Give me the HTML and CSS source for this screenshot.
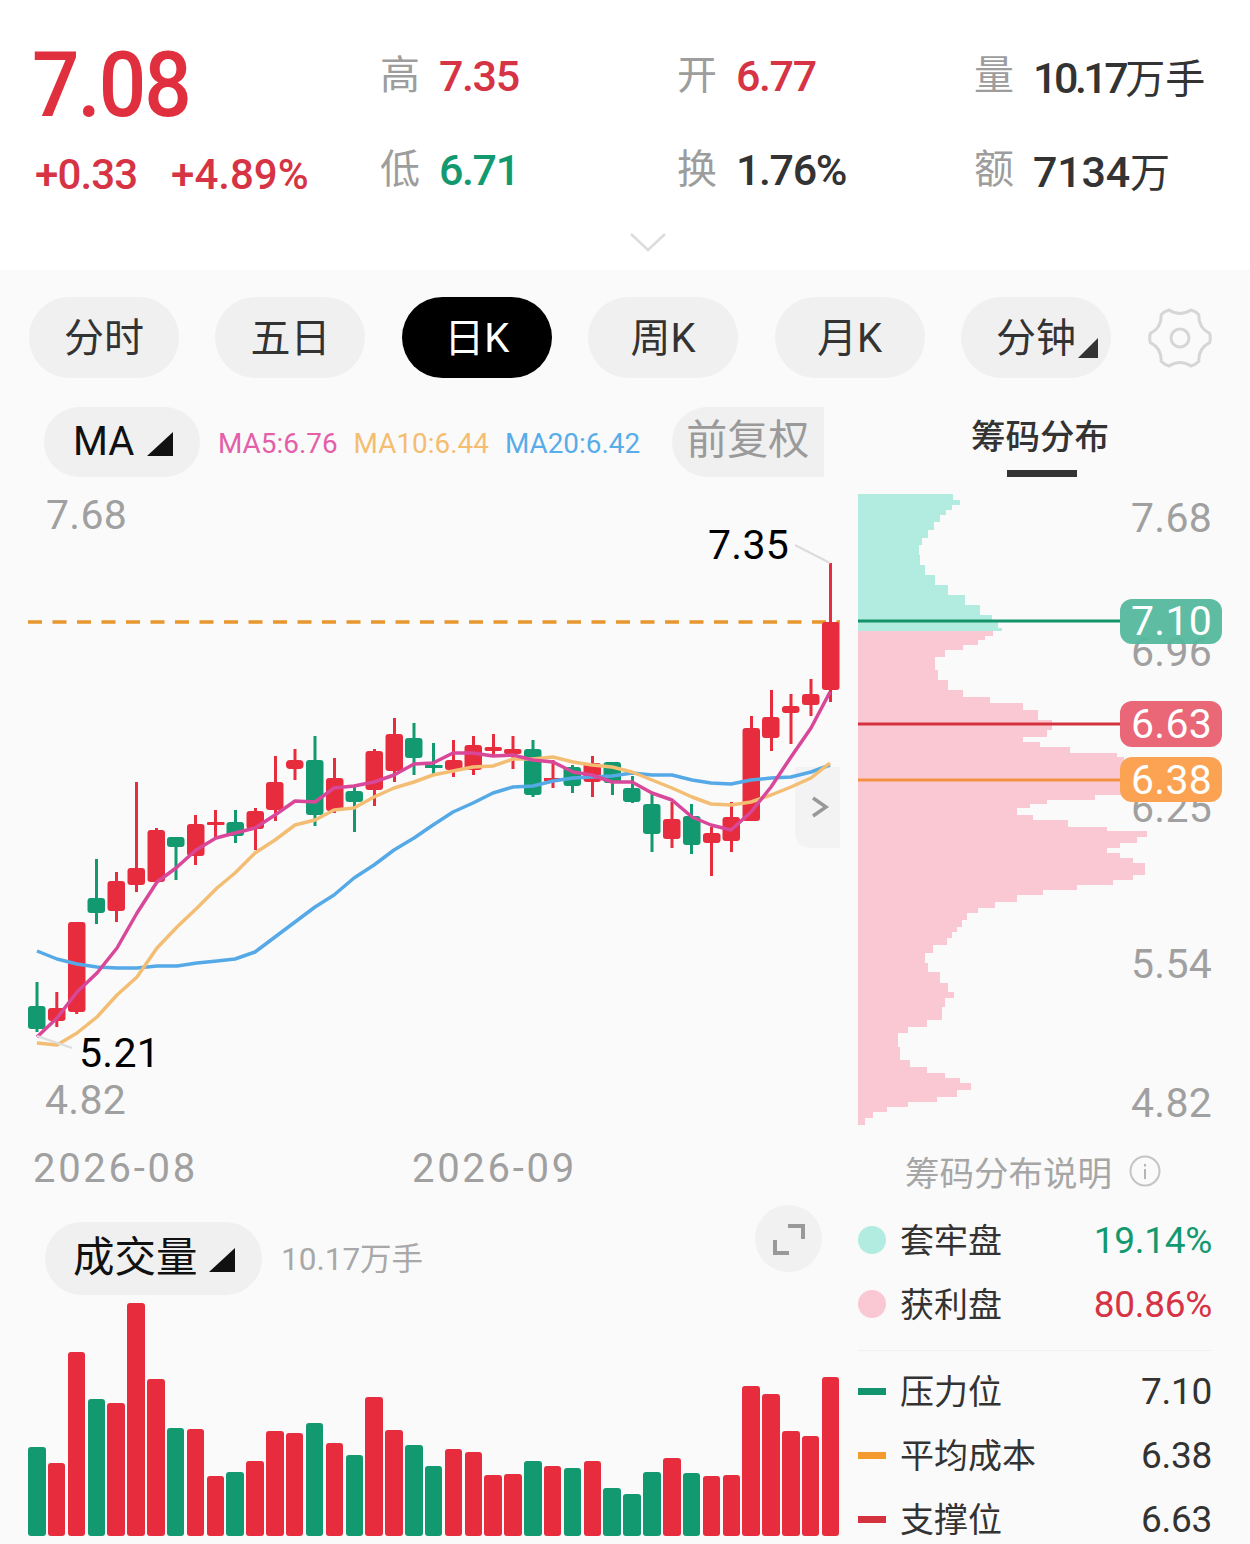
FILE: index.html
```html
<!DOCTYPE html>
<html lang="zh-CN">
<head>
<meta charset="utf-8">
<title>K线</title>
<link rel="stylesheet" href="styles.css">
</head>
<body>
<div class="app">
  <header class="quote">
    <div class="quote-grid">
      <div class="price-block">
        <div class="price">7.08</div>
        <div class="change"><span>+0.33</span><span>+4.89%</span></div>
      </div>
      <div class="stat-col">
        <div class="stat"><span class="k">高</span><span class="v up">7.35</span></div>
        <div class="stat"><span class="k">低</span><span class="v down">6.71</span></div>
      </div>
      <div class="stat-col">
        <div class="stat"><span class="k">开</span><span class="v up">6.77</span></div>
        <div class="stat"><span class="k">换</span><span class="v">1.76%</span></div>
      </div>
      <div class="stat-col">
        <div class="stat"><span class="k">量</span><span class="v"><span class="tight">10.17</span><span class="unit">万手</span></span></div>
        <div class="stat"><span class="k">额</span><span class="v"><span class="open">7134</span><span class="unit">万</span></span></div>
      </div>
    </div>
    <div class="expander">
      <svg class="chev" width="38" height="20" viewBox="0 0 38 20"><path d="M2 2 L19 18 L36 2" fill="none" stroke="#dcdcdc" stroke-width="2.5"/></svg>
    </div>
  </header>

  <main class="panel">
    <nav class="tabs">
      <div class="tab">分时</div>
      <div class="tab">五日</div>
      <div class="tab active">日K</div>
      <div class="tab">周K</div>
      <div class="tab">月K</div>
      <div class="tab">分钟<i class="corner"></i></div>
      <svg class="gear" width="64" height="62" viewBox="-32 -31 64 62"><path d="M29.6-4.7Q31 0 29.6 4.7Q18.2 10.5 18.9 23.3Q15.5 27 10.8 28Q0 21-10.8 28Q-15.5 27-18.9 23.3Q-18.2 10.5-29.6 4.7Q-31 0-29.6-4.7Q-18.2-10.5-18.9-23.3Q-15.5-27-10.8-28Q0-21 10.8-28Q15.5-27 18.9-23.3Q18.2-10.5 29.6-4.7Z" fill="none" stroke="#d6d6d6" stroke-width="3" stroke-linejoin="round"/><circle r="9" fill="none" stroke="#d6d6d6" stroke-width="3"/></svg>
    </nav>

    <div class="columns">
      <section class="left">
        <div class="ma-row">
          <div class="pill ma-pill">MA<i class="corner big"></i></div>
          <div class="ma-legend">
            <span class="ma5">MA5:6.76</span><span class="ma10">MA10:6.44</span><span class="ma20">MA20:6.42</span>
          </div>
          <div class="adjust">前复权</div>
        </div>

        <svg class="kline" width="858" height="650" viewBox="0 480 858 650">
          <text class="axis" x="46" y="529">7.68</text>
          <text class="axis" x="45" y="1114">4.82</text>
          <line x1="28" y1="622" x2="840" y2="622" stroke="#e8962e" stroke-width="3.5" stroke-dasharray="14 10.5"/>
          <path d="M795 767H840V848H812Q795 848 795 830Z" fill="#f3f3f3"/>
          <path d="M813 798L826 807L813 816" fill="none" stroke="#999" stroke-width="3.5"/>

          <g class="cd g"><rect x="35.5" y="982" width="3" height="50"/><rect x="28" y="1006" width="17.5" height="23" rx="3"/></g>
          <g class="cd r"><rect x="55.3" y="992" width="3" height="35"/><rect x="48" y="1008" width="17.5" height="13" rx="3"/></g>
          <g class="cd r"><rect x="75.2" y="1005" width="3" height="9"/><rect x="68" y="922" width="17.5" height="90" rx="3"/></g>
          <g class="cd g"><rect x="95" y="859" width="3" height="65"/><rect x="87.5" y="898" width="17.5" height="15" rx="3"/></g>
          <g class="cd r"><rect x="115" y="872" width="3" height="50"/><rect x="107.5" y="881" width="17.5" height="30" rx="3"/></g>
          <g class="cd r"><rect x="135" y="782" width="3" height="110"/><rect x="127.5" y="868" width="17.5" height="17" rx="3"/></g>
          <g class="cd r"><rect x="155" y="828" width="3" height="56"/><rect x="147.5" y="830" width="17.5" height="52" rx="3"/></g>
          <g class="cd g"><rect x="174.5" y="837" width="3" height="43"/><rect x="167" y="837" width="17.5" height="10" rx="3"/></g>
          <g class="cd r"><rect x="194" y="815" width="3" height="50"/><rect x="187" y="824" width="17.5" height="32" rx="3"/></g>
          <g class="cd r"><rect x="214" y="810" width="3" height="28"/><rect x="207" y="822" width="17.5" height="3" rx="1"/></g>
          <g class="cd g"><rect x="234" y="810" width="3" height="33"/><rect x="226.5" y="822" width="17.5" height="14" rx="3"/></g>
          <g class="cd r"><rect x="254" y="808" width="3" height="42"/><rect x="246.5" y="811" width="17.5" height="18" rx="3"/></g>
          <g class="cd r"><rect x="274" y="756" width="3" height="65"/><rect x="266" y="782" width="17.5" height="28" rx="3"/></g>
          <g class="cd r"><rect x="293.5" y="749" width="3" height="31"/><rect x="286" y="760" width="17.5" height="9" rx="4"/></g>
          <g class="cd g"><rect x="313.5" y="736" width="3" height="90"/><rect x="306" y="760" width="17.5" height="55" rx="3"/></g>
          <g class="cd r"><rect x="333" y="758" width="3" height="55"/><rect x="326" y="778" width="17.5" height="33" rx="3"/></g>
          <g class="cd g"><rect x="353" y="787" width="3" height="45"/><rect x="345.5" y="791" width="17.5" height="11" rx="3"/></g>
          <g class="cd r"><rect x="373" y="749" width="3" height="57"/><rect x="365.5" y="751" width="17.5" height="39" rx="3"/></g>
          <g class="cd r"><rect x="393" y="718" width="3" height="64"/><rect x="385.5" y="734" width="17.5" height="37" rx="3"/></g>
          <g class="cd g"><rect x="412.5" y="723" width="3" height="52"/><rect x="405" y="738" width="17.5" height="20" rx="3"/></g>
          <g class="cd g"><rect x="432" y="743" width="3" height="32"/><rect x="425" y="765" width="17.5" height="3"/></g>
          <g class="cd r"><rect x="452" y="740" width="3" height="37"/><rect x="445" y="760" width="17.5" height="10" rx="3"/></g>
          <g class="cd r"><rect x="472" y="736" width="3" height="39"/><rect x="464.5" y="745" width="17.5" height="25" rx="3"/></g>
          <g class="cd r"><rect x="492" y="734" width="3" height="23"/><rect x="484.5" y="747" width="17.5" height="4" rx="2"/></g>
          <g class="cd r"><rect x="511.5" y="736" width="3" height="33"/><rect x="504" y="749" width="17.5" height="5" rx="2"/></g>
          <g class="cd g"><rect x="531.5" y="740" width="3" height="57"/><rect x="524" y="749" width="17.5" height="46" rx="3"/></g>
          <g class="cd r"><rect x="551.5" y="760" width="3" height="28"/><rect x="544" y="778" width="17.5" height="3"/></g>
          <g class="cd g"><rect x="571" y="765" width="3" height="28"/><rect x="563.5" y="767" width="17.5" height="19" rx="3"/></g>
          <g class="cd r"><rect x="591" y="756" width="3" height="41"/><rect x="583.5" y="763" width="17.5" height="19" rx="3"/></g>
          <g class="cd g"><rect x="611" y="762" width="3" height="33"/><rect x="603.5" y="762" width="17.5" height="21" rx="3"/></g>
          <g class="cd g"><rect x="631" y="776" width="3" height="27"/><rect x="623" y="788" width="17.5" height="14" rx="3"/></g>
          <g class="cd g"><rect x="650.5" y="793" width="3" height="59"/><rect x="643" y="804" width="17.5" height="30" rx="3"/></g>
          <g class="cd r"><rect x="670.5" y="802" width="3" height="46"/><rect x="663" y="819" width="17.5" height="20" rx="3"/></g>
          <g class="cd g"><rect x="690" y="804" width="3" height="50"/><rect x="683" y="816" width="17.5" height="29" rx="3"/></g>
          <g class="cd r"><rect x="710" y="827" width="3" height="49"/><rect x="703" y="833" width="17.5" height="10" rx="3"/></g>
          <g class="cd r"><rect x="730" y="802" width="3" height="50"/><rect x="722.5" y="817" width="17.5" height="24" rx="3"/></g>
          <g class="cd r"><rect x="750" y="716" width="3" height="100"/><rect x="742.5" y="728" width="17.5" height="93" rx="3"/></g>
          <g class="cd r"><rect x="770" y="690" width="3" height="61"/><rect x="762" y="717" width="17.5" height="21" rx="3"/></g>
          <g class="cd r"><rect x="789.5" y="694" width="3" height="50"/><rect x="782" y="706" width="17.5" height="7" rx="3"/></g>
          <g class="cd r"><rect x="809.5" y="679" width="3" height="37"/><rect x="802" y="694" width="17.5" height="11" rx="3"/></g>
          <g class="cd r"><rect x="829" y="563" width="3" height="139"/><rect x="822" y="622" width="17.5" height="68" rx="3"/></g>

          <polyline class="line l20" points="37,951 57,959 77,964 97,967 117,968 137,968 157,966 177,966 197,963 217,961 235,959 255,952 275,937 295,922 315,907 334,895 354,878 374,865 394,850 414,838 433,825 453,812 473,803 493,793 513,787 533,786 553,781 573,778 592,777 612,776 632,773 652,775 672,775 692,780 711,783 731,784 751,780 771,778 791,777 811,772 830,765"/>
          <polyline class="line l10" points="37,1043 57,1045 77,1033 97,1017 117,995 137,977 157,948 177,927 197,908 217,888 235,873 255,853 275,840 295,825 315,820 334,810 354,808 374,797 394,788 414,782 433,775 453,771 473,767 493,766 513,759 533,759 553,757 573,762 592,765 612,767 632,772 652,780 672,788 692,797 711,804 731,805 751,802 771,795 791,787 811,778 830,763"/>
          <polyline class="line l5" points="37,1037 57,1018 77,992 97,973 117,948 137,913 157,882 176,868 196,850 216,838 235,833 255,828 275,815 295,801 315,802 334,788 354,786 374,782 394,775 414,764 433,763 453,753 473,753 493,756 513,755 533,760 553,762 573,772 592,775 612,782 632,782 652,793 672,800 692,817 711,825 731,830 751,812 771,787 791,757 811,728 830,692"/>

          <line x1="795" y1="545" x2="830" y2="563" stroke="#dcdcdc" stroke-width="2"/>
          <line x1="37" y1="1036" x2="72" y2="1048" stroke="#dcdcdc" stroke-width="2"/>
          <text class="mark" x="708" y="559">7.35</text>
          <text class="mark" x="79" y="1067">5.21</text>
        </svg>

        <div class="dates"><span>2026-08</span><span>2026-09</span></div>

        <div class="vol-head">
          <div class="pill vol-pill">成交量<i class="corner big"></i></div>
          <div class="vol-total">10.17万手</div>
          <div class="expand-btn">
            <svg width="34" height="34" viewBox="0 0 34 34"><path d="M16 4H31V17M3 18V31H17" fill="none" stroke="#999" stroke-width="4"/></svg>
          </div>
        </div>

        <div class="vol-bars">
          <b class="g" style="height:89px"></b><b class="r" style="height:73px"></b><b class="r" style="height:184px"></b><b class="g" style="height:137px"></b><b class="r" style="height:133px"></b><b class="r" style="height:233px"></b><b class="r" style="height:157px"></b><b class="g" style="height:108px"></b><b class="r" style="height:107px"></b><b class="r" style="height:60px"></b><b class="g" style="height:64px"></b><b class="r" style="height:75px"></b><b class="r" style="height:105px"></b><b class="r" style="height:103px"></b><b class="g" style="height:113px"></b><b class="r" style="height:93px"></b><b class="g" style="height:81px"></b><b class="r" style="height:139px"></b><b class="r" style="height:106px"></b><b class="g" style="height:91px"></b><b class="g" style="height:70px"></b><b class="r" style="height:87px"></b><b class="r" style="height:84px"></b><b class="r" style="height:61px"></b><b class="r" style="height:62px"></b><b class="g" style="height:75px"></b><b class="r" style="height:70px"></b><b class="g" style="height:68px"></b><b class="r" style="height:75px"></b><b class="g" style="height:48px"></b><b class="g" style="height:42px"></b><b class="g" style="height:64px"></b><b class="r" style="height:78px"></b><b class="g" style="height:63px"></b><b class="r" style="height:60px"></b><b class="r" style="height:61px"></b><b class="r" style="height:150px"></b><b class="r" style="height:142px"></b><b class="r" style="height:105px"></b><b class="r" style="height:100px"></b><b class="r" style="height:159px"></b>
        </div>
      </section>

      <aside class="right">
        <div class="chip-tab"><span>筹码分布</span></div>
        <svg class="chips" width="392" height="650" viewBox="858 480 392 650">
          <path d="M858 494H953V500H960V505H952V510H946V515H940V522H934V530H928V538H922V545H919V555H920V565H925V575H935V585H948V595H965V605H980V615H992V620H998V628H1002V631H858Z" fill="#b2ebe0"/>
          <path d="M858 631H993V636H985V640H978V645H963V650H945V657H935V670H938V680H948V690H963V697H990V703H1023V710H1038V720H1052V730H1047V737H1023V742H1040V747H1070V753H1117V757H1124V795H1095V800H1047V804H1030V808H1017V815H1033V820H1068V827H1107V831H1147V837H1137V843H1120V848H1107V853H1120V858H1133V863H1145V875H1133V880H1113V885H1077V890H1043V895H1017V902H995V908H978V913H967V920H962V927H957V932H952V938H947V945H933V953H925V963H928V972H940V983H948V992H954V998H945V1007H942V1020H927V1027H908V1033H898V1047H900V1060H910V1067H927V1073H945V1078H960V1083H971V1090H957V1097H937V1102H908V1107H887V1112H873V1118H865V1125H858Z" fill="#f9c8d2"/>
          <line x1="858" y1="621" x2="1120" y2="621" stroke="#12936a" stroke-width="3"/>
          <line x1="858" y1="724" x2="1120" y2="724" stroke="#d4323f" stroke-width="3"/>
          <line x1="858" y1="780" x2="1120" y2="780" stroke="#f59043" stroke-width="3"/>
          <text class="axis" x="1131" y="532">7.68</text>
          <text class="axis" x="1131" y="666">6.96</text>
          <text class="axis" x="1131" y="822">6.25</text>
          <text class="axis" x="1131" y="978">5.54</text>
          <text class="axis" x="1131" y="1117">4.82</text>
          <rect x="1120" y="599" width="102" height="45" rx="12" fill="#54b89d" fill-opacity=".94"/>
          <rect x="1120" y="701" width="102" height="46" rx="12" fill="#e96776"/>
          <rect x="1120" y="757" width="102" height="45" rx="12" fill="#fba352"/>
          <text class="badge" x="1131" y="635">7.10</text>
          <text class="badge" x="1131" y="738">6.63</text>
          <text class="badge" x="1131" y="794">6.38</text>
        </svg>
        <div class="explain"><span>筹码分布说明</span>
          <svg width="32" height="32" viewBox="0 0 32 32"><circle cx="16" cy="16" r="14.5" fill="none" stroke="#c4c4c4" stroke-width="2"/><rect x="15" y="14" width="2" height="10" fill="#b5b5b5"/><rect x="15" y="9" width="2" height="2.5" fill="#b5b5b5"/></svg>
        </div>
        <div class="legend">
          <div class="row"><i class="dot teal"></i><span class="name">套牢盘</span><span class="num down">19.14%</span></div>
          <div class="row"><i class="dot pink"></i><span class="name">获利盘</span><span class="num up">80.86%</span></div>
          <div class="divider"></div>
          <div class="row"><i class="dash d-g"></i><span class="name">压力位</span><span class="num">7.10</span></div>
          <div class="row"><i class="dash d-o"></i><span class="name">平均成本</span><span class="num">6.38</span></div>
          <div class="row"><i class="dash d-r"></i><span class="name">支撑位</span><span class="num">6.63</span></div>
        </div>
      </aside>
    </div>
  </main>
</div>
</body>
</html>
```
FILE: styles.css
```css
* { box-sizing: border-box; }
html, body { margin: 0; padding: 0; background: #fafafa; }
body { font-family: Roboto, "Noto Sans CJK SC", sans-serif; color: #333; }
.app { width: 1250px; height: 1544px; overflow: hidden; }

.quote { height: 270px; background: #fff; position: relative; }
.quote-grid { display: grid; grid-template-columns: 347px 297px 297px 1fr; padding: 36px 0 0 33px; }
.price { font-size: 90px; line-height: 100px; font-weight: 500; color: #e0303f; letter-spacing: -2.2px; margin-left: -1px; transform: scaleX(0.93); transform-origin: left center; }
.change { display: flex; gap: 34px; margin-top: 14px; padding-left: 2px; font-size: 42px; line-height: 50px; color: #d63344; font-weight: 500; letter-spacing: -0.9px; }
.change span + span { letter-spacing: 0; }
.stat-col { display: flex; flex-direction: column; gap: 34px; margin-top: 10px; }
.stat { display: flex; align-items: center; height: 60px; gap: 19px; }
.k { font-size: 40px; color: #9d9d9d; font-weight: 400; margin-top: -8px; }
.v { font-size: 43px; font-weight: 500; color: #333; letter-spacing: -1.4px; white-space: nowrap; }
.tight { letter-spacing: -3.5px; }
.open { letter-spacing: -0.2px; }
.unit { font-size: 40px; font-weight: 400; letter-spacing: 0; }
.up { color: #d63344; }
.down { color: #13996f; }
.expander { position: absolute; left: 629px; top: 232px; line-height: 0; }

.panel { background: #fafafa; }
.tabs { display: flex; align-items: center; gap: 36.4px; padding: 27px 0 0 29px; height: 108px; }
.tab { position: relative; width: 150px; height: 81px; border-radius: 40.5px; background: #f0f0f0; display: flex; align-items: center; justify-content: center; padding-bottom: 5px; font-size: 40px; color: #333; font-weight: 400; }
.tab.active { background: #000; color: #fff; }
.gear { margin-left: 1px; }
.corner { position: absolute; right: 13px; bottom: 20px; width: 0; height: 0; border-style: solid; border-width: 0 0 20px 20px; border-color: transparent transparent #333 transparent; }

.columns { display: grid; grid-template-columns: 858px 392px; }
.left { min-width: 0; }
.ma-row { display: flex; align-items: flex-start; height: 73px; margin-top: 29px; padding-left: 44px; }
.pill { position: relative; background: #f0f0f0; color: #111; font-weight: 400; }
.ma-pill { width: 156px; height: 70px; border-radius: 35px; font-size: 40px; line-height: 70px; padding-left: 29px; }
.corner.big { right: 27px; bottom: 21px; border-width: 0 0 24px 26px; border-color: transparent transparent #111 transparent; }
.ma-legend { display: flex; gap: 16px; margin-left: 18px; font-size: 27.9px; line-height: 74px; font-weight: 400; white-space: nowrap; }
.ma5 { color: #e45fa9; }
.ma10 { color: #f5bd70; }
.ma20 { color: #58ade8; }
.adjust { width: 152px; height: 70px; margin-left: 32px; background: #f0f0f0; border-radius: 35px 0 0 35px; color: #9a9a9a; font-size: 41px; line-height: 66px; padding-left: 14px; white-space: nowrap; }

.kline, .chips { display: block; }
.axis { font-family: Roboto, sans-serif; font-size: 41px; fill: #a0a0a0; font-weight: 400; letter-spacing: 0.3px; }
.mark { font-family: Roboto, sans-serif; font-size: 41px; fill: #000; font-weight: 400; letter-spacing: 0.3px; }
.badge { font-family: Roboto, sans-serif; font-size: 41px; fill: #fff; font-weight: 400; letter-spacing: 0.3px; }
.cd.g { fill: #13996f; }
.cd.r { fill: #e72c3d; }
.line { fill: none; stroke-width: 3.5; stroke-linejoin: round; }
.l5 { stroke: #d9479a; }
.l10 { stroke: #f3be74; }
.l20 { stroke: #55a9e6; }

.dates { display: flex; height: 72px; padding: 14px 0 0 33px; font-size: 40px; line-height: 50px; color: #a0a0a0; font-weight: 400; letter-spacing: 2.7px; }
.dates span { width: 379px; }
.vol-head { position: relative; display: flex; align-items: flex-start; height: 95px; padding: 20px 0 0 45px; }
.vol-pill { width: 217px; height: 73px; border-radius: 36.5px; font-size: 41.5px; line-height: 71px; padding-left: 28px; }
.vol-pill .corner.big { right: 27px; bottom: 23px; }
.vol-total { margin: 16px 0 0 19px; font-size: 31.5px; line-height: 44px; color: #a8a8a8; font-weight: 400; }
.expand-btn { position: absolute; left: 755px; top: 3px; width: 67px; height: 67px; border-radius: 50%; background: #f1f1f1; display: flex; align-items: center; justify-content: center; }

.vol-bars { display: flex; align-items: flex-end; gap: 2.35px; height: 239px; padding-left: 28px; }
.vol-bars b { flex: 0 0 17.5px; border-radius: 3px; }
.vol-bars .g { background: #13996f; }
.vol-bars .r { background: #e72c3d; }

.chip-tab { height: 73px; margin-top: 29px; padding: 7px 0 0 113px; }
.chip-tab span { position: relative; display: block; width: 138px; height: 46px; font-size: 34.5px; line-height: 46px; color: #333; font-weight: 500; white-space: nowrap; }
.chip-tab span::after { content: ""; position: absolute; left: 36px; top: 56px; width: 70px; height: 7px; background: #333; }
.explain { display: flex; align-items: center; gap: 17px; height: 50px; margin-top: 16px; padding-left: 47px; font-size: 34.5px; color: #a6a6a6; font-weight: 400; }
.legend { margin-top: 10px; width: 354px; }
.row { display: flex; align-items: center; height: 64px; }
.name { margin-left: 14px; font-size: 34px; color: #333; font-weight: 400; white-space: nowrap; }
.num { margin-left: auto; margin-top: 4px; font-size: 37px; font-weight: 400; white-space: nowrap; letter-spacing: -0.3px; }
.dot { flex: 0 0 28px; width: 28px; height: 28px; border-radius: 50%; margin-top: 4px; }
.teal { background: #b2ebe0; }
.pink { background: #f9c8d2; }
.divider { height: 1px; margin: 16px 0 6px; background: #f1f1f1; }
.dash { flex: 0 0 28px; width: 28px; height: 7px; margin-top: 4px; }
.d-g { background: #13936e; }
.d-o { background: #f59a2e; }
.d-r { background: #d4323f; }
```
